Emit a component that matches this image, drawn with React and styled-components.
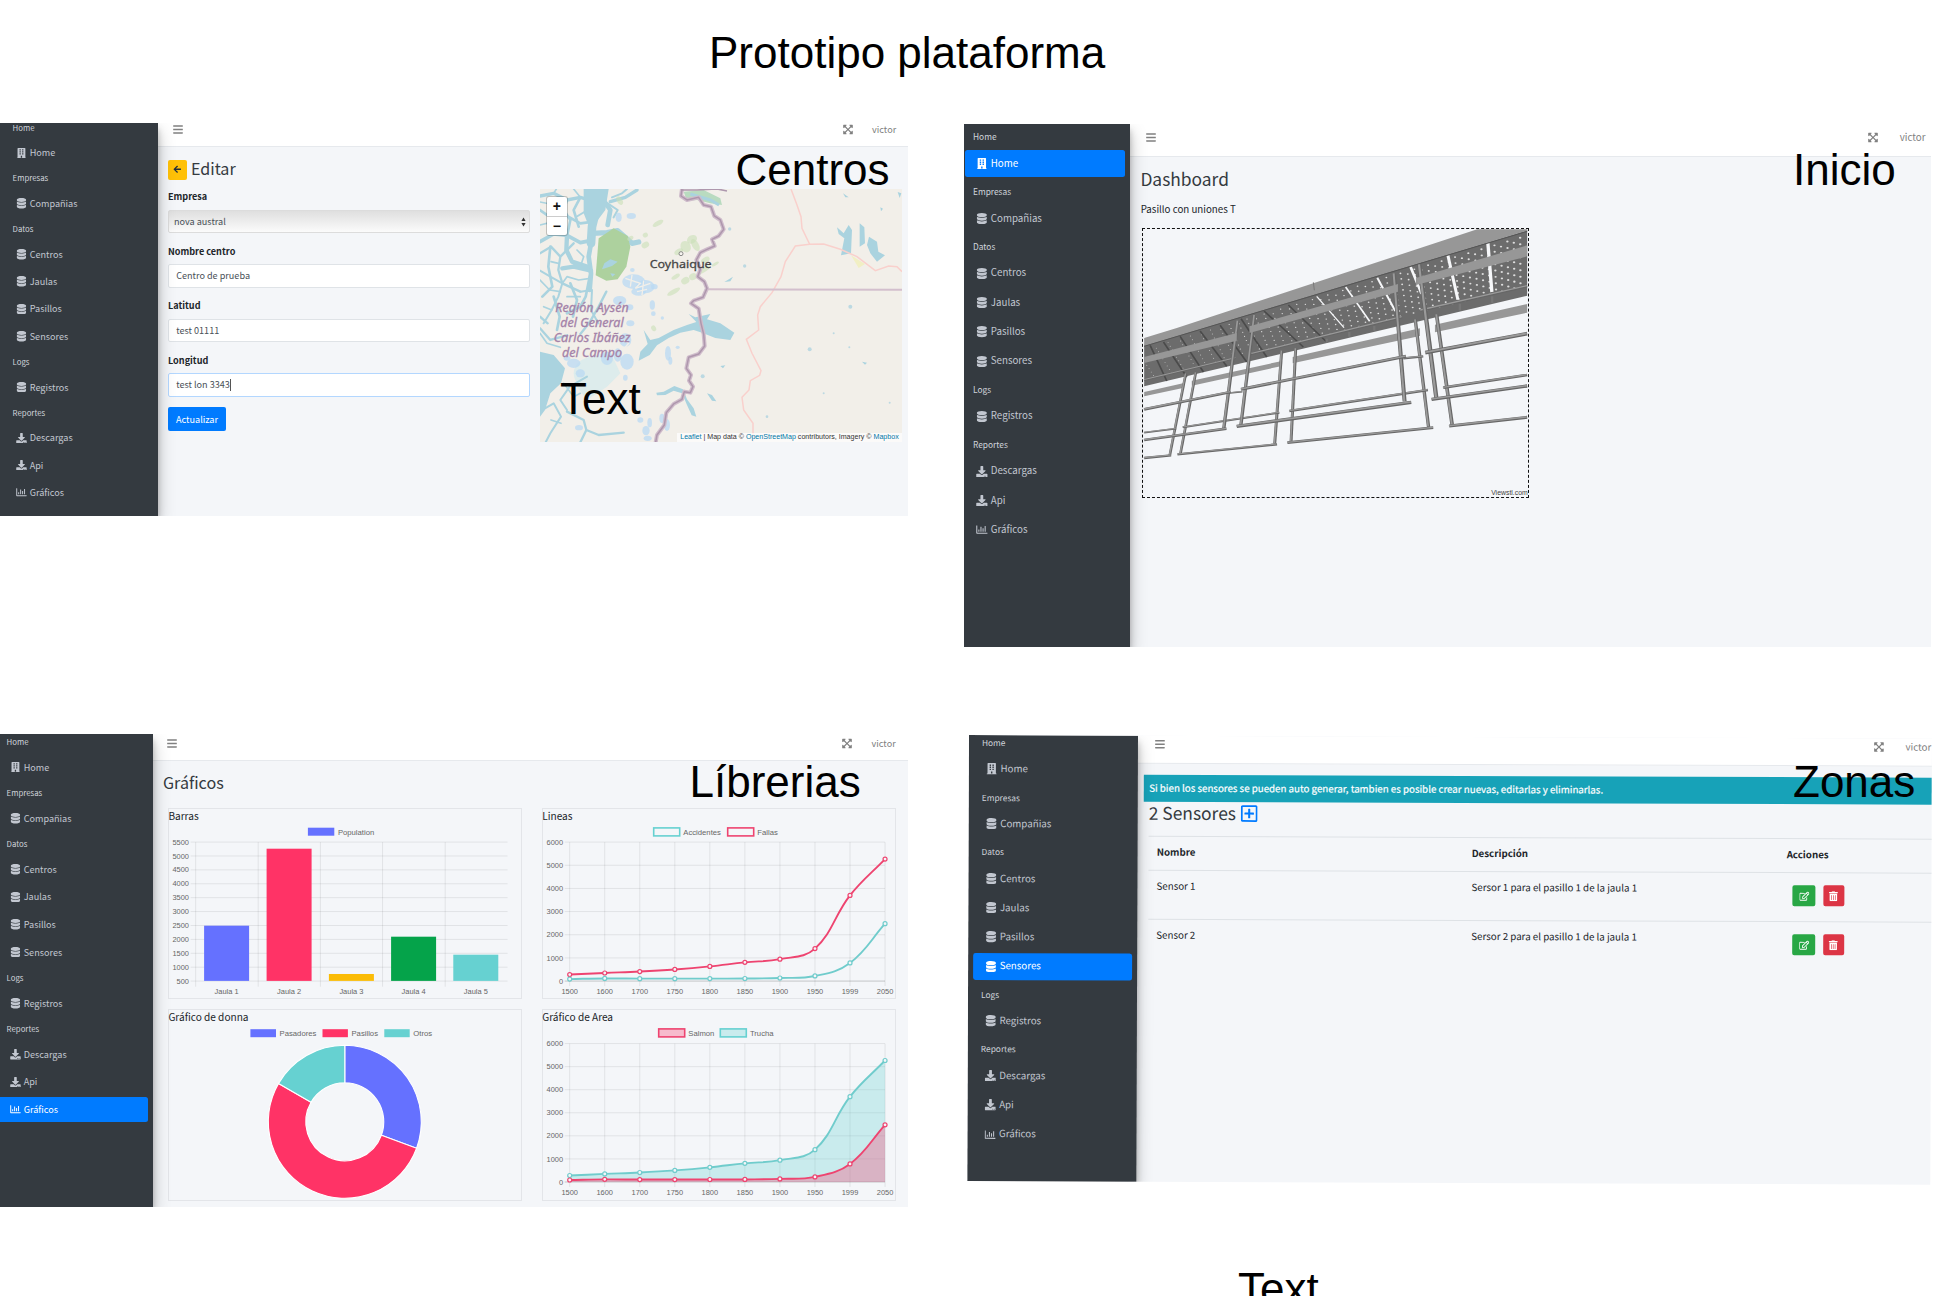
import React from "react";
import styled, { createGlobalStyle, css } from "styled-components";
import {
  FaArrowLeft,
  FaBars,
  FaBuilding,
  FaDatabase,
  FaDownload,
  FaExpandArrowsAlt,
  FaRegChartBar,
  FaRegEdit,
  FaRegPlusSquare,
  FaTrashAlt,
} from "react-icons/fa";

const ui = `"Noto Sans CJK SC", "Noto Sans", sans-serif`;
const helv = `"Liberation Sans", Arial, sans-serif`;

const Global = createGlobalStyle`
  * { box-sizing: border-box; }
  html, body { margin: 0; background: #fff; overflow: hidden; }
`;

/* ---------- board ---------- */

const Board = styled.div`
  position: relative;
  width: 1934px;
  height: 1296px;
  overflow: hidden;
  display: grid;
  grid-template-columns: 964px 970px;
  grid-template-rows: 123px 611px 562px;
  background: #fff;
  font-family: ${ui};
`;

const BoardHeader = styled.header`
  grid-column: 1 / -1;
  padding: 28px 0 0 709px;
`;

const BoardTitle = styled.h1`
  margin: 0;
  font: 400 44px/50px ${helv};
  color: #000;
  white-space: nowrap;
`;

const Cell = styled.section`
  position: relative;
  padding: ${(p) => p.$pad || 0};
`;

const Caption = styled.div`
  position: absolute;
  left: ${(p) => p.$x}px;
  top: ${(p) => p.$y}px;
  z-index: 3;
  font: 400 44px/50px ${helv};
  color: #000;
  white-space: nowrap;
`;

/* ---------- application frame ---------- */

const Screen = styled.div`
  display: flex;
  width: ${(p) => p.$w}px;
  height: ${(p) => p.$h}px;
  overflow: hidden;
  background: #f4f6f9;
  color: #212529;
  font-size: ${(p) => p.$font}px;
  ${(p) => p.$tilt && css`
    transform: rotate(${p.$tilt}deg);
    transform-origin: 0 0;
  `}
`;

const Side = styled.nav`
  flex: none;
  position: relative;
  z-index: 2;
  width: ${(p) => p.$w}px;
  background: #343a40;
  box-shadow: 0 8px 16px rgba(0, 0, 0, 0.25), 0 6px 6px rgba(0, 0, 0, 0.22);
  overflow: hidden;
`;

const SideList = styled.ul`
  list-style: none;
  margin: ${(p) => p.$shift}px 0 0;
  padding: 0;
`;

const SideHeader = styled.li`
  display: flex;
  align-items: center;
  height: ${(p) => p.$h}px;
  padding: 0 0 1.4px ${(p) => p.$x}px;
  font-size: 0.86em;
  line-height: 1;
  color: #d0d4db;
`;

const SideItem = styled.li`
  display: flex;
  align-items: center;
  height: ${(p) => p.$h}px;
  margin: 0 5px ${(p) => p.$gap}px ${(p) => p.$left}px;
  padding-left: ${(p) => p.$x}px;
  border-radius: 2.5px;
  line-height: 1;
  color: ${(p) => (p.$on ? "#fff" : "#c2c7d0")};
  background: ${(p) => (p.$on ? "#007bff" : "transparent")};
  svg {
    flex: none;
    width: 1.2em;
    height: 1.15em;
    margin-right: 0.32em;
  }
`;

const Main = styled.div`
  flex: 1;
  min-width: 0;
`;

const Top = styled.header`
  display: flex;
  height: ${(p) => p.$h}px;
  padding: ${(p) => p.$pad};
  background: #fff;
  border-bottom: 1px solid #e6e9ed;
  color: #808080;
  line-height: 11px;
  svg {
    width: 10px;
    height: 11px;
  }
`;

const User = styled.span`
  margin-left: ${(p) => p.$gap}px;
`;

const Grow = styled.span`
  flex: 1;
`;

const MENU = [
  ["Home", [["Home", FaBuilding]]],
  ["Empresas", [["Compañias", FaDatabase]]],
  ["Datos", [["Centros", FaDatabase], ["Jaulas", FaDatabase], ["Pasillos", FaDatabase], ["Sensores", FaDatabase]]],
  ["Logs", [["Registros", FaDatabase]]],
  ["Reportes", [["Descargas", FaDownload], ["Api", FaDownload], ["Gráficos", FaRegChartBar]]],
];

function SideMenu({ w, shift, head, item, gap, headX, left, itemX, active }) {
  return (
    <Side $w={w}>
      <SideList $shift={shift}>
        {MENU.map(([title, items]) => (
          <React.Fragment key={title}>
            <SideHeader $h={head} $x={headX}>{title}</SideHeader>
            {items.map(([name, Icon]) => (
              <SideItem key={name} $h={item} $gap={gap} $left={left} $x={itemX} $on={active === name}>
                <Icon />
                {name}
              </SideItem>
            ))}
          </React.Fragment>
        ))}
      </SideList>
    </Side>
  );
}

function TopBar({ h, pad, gap }) {
  return (
    <Top $h={h} $pad={pad}>
      <FaBars />
      <Grow />
      <FaExpandArrowsAlt />
      <User $gap={gap}>victor</User>
    </Top>
  );
}

const Heading = styled.h2`
  margin: ${(p) => p.$m || 0};
  font-size: ${(p) => p.$size}px;
  font-weight: 400;
  line-height: ${(p) => p.$lh || 24}px;
  color: #343a40;
  display: flex;
  align-items: center;
`;

/* ---------- Centros ---------- */

const EditHead = styled.div`
  display: flex;
  align-items: center;
  gap: 4px;
  padding: 12.5px 0 0 9.6px;
`;

const BackButton = styled.button`
  display: grid;
  place-items: center;
  width: 19px;
  height: 20px;
  padding: 0;
  border: 0;
  border-radius: 2px;
  background: #ffc107;
  color: #1f2d3d;
  font-size: 8.5px;
`;

const EditTitle = styled(Heading)`
  margin-top: -3px;
`;

const EditBody = styled.div`
  display: flex;
  gap: 9.7px;
  padding: 9.7px 0 0 9.6px;
`;

const Form = styled.form`
  width: 362px;
`;

const Field = styled.div`
  margin-bottom: 10.4px;
`;

const FieldLabel = styled.label`
  display: block;
  height: 16px;
  line-height: 15.4px;
  margin-bottom: 4.7px;
  font-weight: 700;
`;

const Input = styled.div`
  display: flex;
  align-items: center;
  height: 23.4px;
  padding: 0 7.2px;
  border: 1px solid ${(p) => (p.$focus ? "#b3d7ff" : "#dfe3e7")};
  border-radius: 2px;
  background: #fff;
  color: #495057;
  line-height: 1;
`;

const Select = styled(Input)`
  justify-content: space-between;
  padding: 0 2.5px 0 5px;
  border: 1px solid #dcdcdc;
  background: linear-gradient(#dfdfdf, #eeeeee 55%, #fbfbfb);
`;

const Caret = styled.i`
  width: 0.7px;
  height: 12px;
  background: #555;
`;

const Submit = styled.button`
  width: 58px;
  height: 24px;
  padding: 0;
  border: 0;
  border-radius: 2px;
  background: #007bff;
  color: #fff;
  font: 9.1px/1 ${ui};
`;

const MapBox = styled.div`
  position: relative;
  width: 362px;
  height: 253.3px;
  overflow: hidden;
  background: #f2efe9;
  > svg {
    display: block;
    width: 100%;
    height: 100%;
  }
`;

const ZoomBox = styled.div`
  position: absolute;
  left: 7.6px;
  top: 7.6px;
  width: 19.4px;
  height: 38.5px;
  border-radius: 2px;
  background: #fff;
  box-shadow: 0 0 0 1px rgba(0, 0, 0, 0.2);
  display: grid;
  grid-template-rows: 1fr 1fr;
`;

const ZoomButton = styled.span`
  display: grid;
  place-items: center;
  font: 700 14px/1 ${helv};
  color: #111;
  & + & {
    border-top: 1px solid #ccc;
  }
`;

const Credit = styled.div`
  position: absolute;
  right: 0;
  bottom: 0;
  height: 9.6px;
  padding: 0 3px;
  background: rgba(255, 255, 255, 0.7);
  font: 7.08px/9.6px ${helv};
  color: #333;
  white-space: nowrap;
  a {
    color: #0078a8;
  }
`;

const SHORES = [
  [26, "M205 237 L200 290 L185 350 L182 400"],
  [14, "M205 250 L240 300 L232 345 M182 400 L175 440 L182 490 L178 540"],
  [16, "M185 370 L230 368 L262 362 L305 400 L325 396"],
  [10, "M29 258 L70 250 L110 270 L150 262 L195 275 M320 240 L285 262 L240 275"],
  [8, "M29 300 L60 322 L110 318 L150 340 L190 335 M110 270 L100 300 L120 330 L112 370"],
  [11, "M29 395 L70 372 L110 376 L150 398 L180 392"],
  [7, "M29 430 L62 410 L90 440 L84 480 L96 520 L150 545 M90 440 L130 400"],
  [13, "M110 376 L108 420 L125 455 L170 470 M96 475 L130 470 L182 482"],
  [6, "M29 482 L60 500 L96 520 L84 560 L64 600 L40 640 M150 545 L185 540 L182 600 L204 640"],
  [8, "M60 410 L54 470 L66 530 L36 560 M178 500 L166 560 L150 590 L110 610"],
  [7, "M228 545 L205 590 L176 640 L150 672 M29 655 L60 690 L110 676 M29 620 L52 640"],
  [6, "M170 800 L118 830 L90 870 L110 900 M36 900 L70 880 L92 920 L60 970 L46 997"],
  [7, "M150 997 L168 960 L205 975 L280 968 M168 960 L160 930 L110 905"],
  [8, "M145 350 L130 300 L150 262 M70 560 L88 620 L80 660 M120 520 L140 570 L128 620"],
  [5, "M29 345 L58 338 L96 352 L112 376 M58 338 L64 372 M29 276 L60 282 L98 300 M70 250 L78 237 M130 237 L150 262"],
  [6, "M232 280 L262 300 L250 322 M245 262 L275 250 L290 237 M172 300 L142 318 M190 262 L165 240"],
  [5, "M140 420 L160 440 L150 470 M62 455 L84 460 M29 510 L58 540 L90 545 M110 560 L150 560 M40 590 L64 600"],
  [5, "M96 520 L110 500 L145 510 L180 505 M29 670 L50 700 L90 712 M100 820 L130 860 L150 850 M62 930 L92 940"],
];

const LAKES = [
  [310, 515, 34, 22], [345, 530, 28, 20], [325, 545, 22, 12], [372, 530, 10, 8], [265, 322, 9, 14], [303, 318, 14, 9],
  [268, 572, 20, 14], [298, 592, 11, 9], [300, 640, 12, 9], [285, 690, 18, 20], [290, 755, 20, 24], [262, 735, 12, 20],
  [366, 585, 8, 14], [369, 611, 7, 7], [396, 624, 5, 5], [413, 730, 9, 22], [420, 752, 6, 12], [442, 712, 6, 5],
  [130, 760, 20, 14], [150, 790, 14, 12], [110, 745, 10, 7], [285, 803, 7, 9], [330, 930, 9, 8], [347, 962, 11, 14],
  [358, 938, 7, 14], [395, 925, 8, 14], [410, 945, 9, 18], [146, 953, 12, 8], [285, 907, 11, 6], [352, 985, 12, 8],
  [306, 480, 7, 6], [230, 745, 18, 20],
];

const WOODS = [
  [383, 340, 18, 7], [345, 405, 12, 9], [268, 272, 8, 14], [485, 388, 16, 12], [466, 410, 15, 18], [495, 405, 10, 20],
  [445, 425, 14, 8], [525, 450, 14, 8], [520, 480, 24, 7], [465, 512, 13, 10], [436, 500, 14, 6], [430, 545, 22, 7],
  [345, 375, 8, 7], [555, 462, 12, 4], [370, 655, 7, 9], [300, 385, 10, 6], [488, 500, 12, 10], [392, 690, 8, 5],
];

const BORDER =
  "M455 237 L452 258 L470 270 L505 262 L520 285 L542 290 L552 318 L570 330 L580 358 L565 378 L545 388 L553 408 L530 418 L510 428 L498 450 L510 478 L502 500 L522 515 L530 535 L518 562 L490 572 L482 580 L505 596 L512 640 L520 672 L523 708 L505 732 L475 742 L468 775 L482 795 L476 812 L488 830 L480 848 L462 845 L455 868 L430 882 L408 908 L402 945 L380 975 L376 997";

function RegionMap() {
  return (
    <svg viewBox="29 237 1086 760" preserveAspectRatio="none">
      <rect x="29" y="237" width="1086" height="760" fill="#f2efe9" />
      <ellipse cx="190" cy="790" rx="60" ry="50" fill="#ddecec" />
      <path d="M175 740 L240 725 L270 790 L230 830 L170 870 L140 830Z" fill="#ddecec" />
      {SHORES.map(([w, d], i) => (
        <path key={i} d={d} fill="none" stroke="#aad3df" strokeWidth={w} strokeLinejoin="round" strokeLinecap="round" />
      ))}
      <path d="M29 725 L70 735 L104 775 L92 820 L60 850 L44 900 L29 920Z M160 237 L235 237 L225 300 L180 360 L160 310Z" fill="#aad3df" />
      <path d="M205 385 L250 355 L292 378 L300 410 L288 470 L262 508 L228 512 L196 496Z" fill="#add19e" />
      <path d="M222 460 L240 448 L262 455 L245 468 L215 478Z M240 490 L255 492 L246 500Z" fill="#aad3df" />
      {WOODS.map(([x, y, a, b], i) => (
        <ellipse key={i} cx={x} cy={y} rx={a} ry={b} fill="#c9dfb8" opacity="0.6" transform={`rotate(-30 ${x} ${y})`} />
      ))}
      <path d="M460 245 L520 240 L570 265 L575 285 L540 280 L500 270 L470 272Z" fill="#b9dbc0" />
      <path d="M480 252 L540 270 L566 285" stroke="#aad3df" strokeWidth="9" fill="none" />
      {LAKES.map(([x, y, a, b], i) => (
        <ellipse key={i} cx={x} cy={y} rx={a} ry={b} fill="#b9d9f3" opacity="0.75" />
      ))}
      <path d="M285 505 L330 520 L315 535 L360 520 M280 690 L295 700 L282 715 M320 545 L350 538 M305 495 L300 530 M340 512 L335 555" stroke="#f2efe9" strokeWidth="4" fill="none" />
      <path
        d="M475 612 L495 622 L540 612 L530 628 L570 640 L612 668 L600 690 L555 684 L515 668 L490 660 L450 668 L415 684 L380 706 L358 735 L325 752 L330 725 L352 702 L340 660 L360 690 L385 684 L430 660 L470 645 L498 636Z"
        fill="#aad3df"
      />
      <path
        d="M378 848 L400 845 L432 828 L458 838 L470 868 L490 895 L498 920 L484 916 L470 885 L455 850 L430 842 L405 855 L380 856Z M530 850 L545 855 L558 874 L545 872Z M582 516 L608 500 L600 514Z M570 768 L585 766 L578 775Z M938 250 L955 262 L945 262Z M995 755 L1010 758 L1004 764Z"
        fill="#aad3df"
      />
      <path
        d="M920 352 L940 370 L955 345 L965 360 L962 430 L932 436 L942 385 L925 372Z M988 340 L1002 352 L1004 400 L988 410Z M1016 380 L1040 395 L1044 425 L1064 436 L1040 455 L1020 430 L1010 405Z M1102 246 L1113 250 L1108 264Z M1050 292 L1058 296 L1052 304Z"
        fill="#aad3df"
      />
      <path d="M962 436 L1004 462 L985 474Z" fill="#f1efc4" />
      <g fill="#bcd9e2">
        <circle cx="643" cy="468" r="5" /><circle cx="960" cy="590" r="6" /><circle cx="838" cy="718" r="6" />
        <circle cx="910" cy="670" r="3" /><circle cx="957" cy="712" r="3" /><circle cx="517" cy="799" r="6" />
        <circle cx="710" cy="920" r="4" /><circle cx="880" cy="850" r="3" /><circle cx="1078" cy="878" r="3" /><circle cx="598" cy="357" r="5" />
      </g>
      <path
        d="M782 237 L800 285 L812 320 L815 355 L838 403 L880 402 L930 418 L980 440 L1035 482 L1075 468 L1100 470 L1115 485 M838 403 L795 408 L765 455 L752 500 L725 548 L690 590 L682 615 L685 660 L648 688 L665 730 L692 782 L688 796 L660 812 L656 840 L635 862 L640 900 L668 940 L668 997"
        fill="none"
        stroke="#f9d0cc"
        strokeWidth="4.5"
      />
      <path d="M530 538 L1115 539" stroke="#d3bfcd" strokeWidth="6" />
      <path d={BORDER} fill="none" stroke="#cfbccb" strokeWidth="12" strokeLinejoin="round" />
      <path d={BORDER} fill="none" stroke="#ae97ad" strokeWidth="4.5" strokeLinejoin="round" />
      <path d="M452 240 L500 240 L560 237 L590 243" fill="none" stroke="#ae97ad" strokeWidth="5" />
      <circle cx="452" cy="431" r="6" fill="#f7f5f0" stroke="#777" strokeWidth="2.5" />
      <g fontFamily={`"Noto Sans", sans-serif`} textAnchor="middle">
        <text x="451" y="475" fontSize="34" fill="#444" stroke="#444" strokeWidth="0.8" textLength="186" lengthAdjust="spacingAndGlyphs">Coyhaique</text>
        <g fontSize="36" fontStyle="italic" fill="#a482a8" stroke="#a482a8" strokeWidth="0.9">
          <text x="185" y="607" textLength="220" lengthAdjust="spacingAndGlyphs">Región Aysén</text>
          <text x="185" y="652" textLength="190" lengthAdjust="spacingAndGlyphs">del General</text>
          <text x="185" y="697" textLength="230" lengthAdjust="spacingAndGlyphs">Carlos Ibáñez</text>
          <text x="185" y="742" textLength="180" lengthAdjust="spacingAndGlyphs">del Campo</text>
        </g>
      </g>
    </svg>
  );
}

const FIELDS = [["Nombre centro", "Centro de prueba"], ["Latitud", "test 01111"], ["Longitud", "test lon 3343"]];

function Centros() {
  return (
    <Screen $w={907.7} $h={392.6} $font={9.1}>
      <SideMenu w={158.4} shift={-6.4} head={23.4} item={25.6} gap={1.77} headX={12.6} left={4.5} itemX={11.4} />
      <Main>
        <TopBar h={24} pad="1px 11.5px 0 14.3px" gap={19.2} />
        <EditHead>
          <BackButton><FaArrowLeft /></BackButton>
          <EditTitle $size={16.1} $lh={20}>Editar</EditTitle>
        </EditHead>
        <EditBody>
          <Form>
            <Field>
              <FieldLabel>Empresa</FieldLabel>
              <Select>
                nova austral
                <svg width="5" height="10" viewBox="0 0 5 10" fill="#333">
                  <path d="M2.5 0.6 L4.6 4 H0.4Z M2.5 9.4 L4.6 6 H0.4Z" />
                </svg>
              </Select>
            </Field>
            {FIELDS.map(([label, value]) => (
              <Field key={label}>
                <FieldLabel>{label}</FieldLabel>
                <Input $focus={label === "Longitud"}>
                  {value}
                  {label === "Longitud" && <Caret />}
                </Input>
              </Field>
            ))}
            <Submit type="button">Actualizar</Submit>
          </Form>
          <MapBox>
            <RegionMap />
            <ZoomBox>
              <ZoomButton>+</ZoomButton>
              <ZoomButton>−</ZoomButton>
            </ZoomBox>
            <Credit>
              <a>Leaflet</a> | Map data © <a>OpenStreetMap</a> contributors, Imagery © <a>Mapbox</a>
            </Credit>
          </MapBox>
        </EditBody>
      </Main>
    </Screen>
  );
}

/* ---------- Inicio ---------- */

const Lead = styled.p`
  margin: 10.4px 0 10.6px 10.7px;
  line-height: 16px;
`;

const Viewer = styled.div`
  position: relative;
  width: 387px;
  height: 270px;
  margin-left: 12.3px;
  border: 1px dashed #111;
  > svg {
    display: block;
    width: 100%;
    height: 100%;
  }
`;

const ViewerCredit = styled.span`
  position: absolute;
  right: 0.5px;
  bottom: 0;
  font: 6.9px/8px ${helv};
  color: #444;
`;

const SLITS = [
  [1104, 98, 1116, 245, 10], [984, 135, 1014, 268, 9], [872, 170, 905, 250, 8],
  [772, 202, 826, 302, 6], [677, 230, 749, 333, 5], [590, 258, 672, 352, 4],
];
const SEAMS = [
  [505, 284, 620, 395], [432, 302, 550, 410], [363, 325, 440, 440], [300, 345, 380, 455], [240, 362, 320, 468],
  [180, 378, 250, 485], [130, 395, 200, 500], [90, 405, 140, 512],
];
const BEAMS = [
  "72,440 350,368 350,391 72,458", "388,348 834,221 834,244 388,368", "888,203 1222,105 1222,138 888,224",
  "72,545 192,518 192,532 72,558", "215,511 486,452 486,467 215,526", "518,440 900,354 900,377 518,459",
  "945,343 1222,281 1222,307 945,366",
];
const RAILS = [
  [72, 509, 347, 443, 6], [388, 432, 846, 320, 7], [902, 300, 1222, 227, 8],
  [330, 548, 367, 544, 5], [850, 444, 910, 438, 7],
  [72, 667, 168, 655, 5], [188, 651, 478, 607, 6], [508, 602, 924, 539, 7], [970, 532, 1222, 494, 8],
  [72, 743, 153, 735, 7], [172, 732, 471, 702, 7], [502, 697, 940, 652, 8], [988, 647, 1222, 621, 9],
];
const POSTS = [
  [197, 490, 149, 735, 8], [227, 487, 181, 730, 8], [485, 422, 464, 700, 9], [527, 415, 513, 695, 9],
  [886, 328, 926, 650, 10], [950, 313, 997, 645, 11],
];
const FRONT_RAILS = [
  [72, 597, 332, 545, 8], [363, 537, 858, 438, 9], [916, 427, 1222, 370, 11],
  [72, 689, 319, 655, 8], [350, 648, 874, 576, 10], [935, 567, 1222, 527, 10],
];
const FRONT_POSTS = [
  [353, 332, 311, 655, 10], [403, 315, 362, 648, 10], [822, 190, 854, 573, 12], [898, 163, 950, 568, 13],
];

function Bars({ list }) {
  return list.map(([x1, y1, x2, y2, w], i) => (
    <g key={i}>
      <line x1={x1} y1={y1} x2={x2} y2={y2} stroke="#666" strokeWidth={w} />
      <line x1={x1 - 1} y1={y1 - 1} x2={x2 - 1} y2={y2 - 1} stroke="#9a9a9a" strokeWidth={w * 0.5} />
    </g>
  ));
}

function perforations() {
  const dots = [];
  for (let c = 0; c < 50; c += 1) {
    const t = c / 49;
    const x = 50 + 1170 * Math.pow(t, 0.8);
    const top = 408 - ((x - 72) * 346) / 1150;
    const bottom = 528 - ((x - 72) * 273) / 1150;
    for (let r = 0; r < 8; r += 1) {
      const v = (r + 0.5 + (c % 2) * 0.5) / 9;
      const px = x + v * 60 * (1 - t);
      if (px < 1218 && px > 76) {
        const py = top + (bottom - top) * v * 0.92 + 4 - (px - x) * 0.28;
        dots.push([px, py, 1.2 + 1.9 * t]);
      }
    }
  }
  return dots;
}

function Walkway() {
  return (
    <svg viewBox="68.5 56 1156 804" preserveAspectRatio="none">
      <polygon points="72,404 1222,60 1222,256 72,528" fill="#6c6c6c" />
      {perforations().map(([x, y, r], i) => (
        <ellipse key={i} cx={x} cy={y} rx={r * 1.2} ry={r} fill="#dedede" />
      ))}
      {SEAMS.map(([x1, y1, x2, y2], i) => (
        <line key={i} x1={x1} y1={y1} x2={x2} y2={y2} stroke="#4b4b4b" strokeWidth="5" />
      ))}
      {SLITS.map(([x1, y1, x2, y2, w], i) => (
        <line key={i} x1={x1} y1={y1} x2={x2} y2={y2} stroke="#f7f8fa" strokeWidth={w} />
      ))}
      <polygon points="72,383 170,353 1072,57 1222,57 1222,61 72,407" fill="#979797" />
      <path d="M72 408 L1222 63" stroke="#555" strokeWidth="3" />
      <path d="M580 216 L583 240" stroke="#777" strokeWidth="3" />
      {BEAMS.slice(3).map((p) => <polygon key={p} points={p} fill="#979797" />)}
      <Bars list={POSTS} />
      <Bars list={RAILS} />
      <Bars list={FRONT_POSTS} />
      {BEAMS.slice(0, 3).map((p) => <polygon key={p} points={p} fill="#979797" />)}
      <Bars list={FRONT_RAILS} />
      <path d="M688 365 v14 M763 347 v14 M620 385 v12 M1020 280 v20 M1117 258 v20" stroke="#777" strokeWidth="7" />
    </svg>
  );
}

function Inicio() {
  return (
    <Screen $w={966.7} $h={523} $font={9.74}>
      <SideMenu w={165.8} shift={0} head={25.7} item={27.4} gap={1.92} headX={8.8} left={1} itemX={10.8} active="Home" />
      <Main>
        <TopBar h={32.6} pad="8px 5.4px 0 16px" gap={21.5} />
        <Heading $size={17.4} $m="10.2px 0 0 10.4px">Dashboard</Heading>
        <Lead>Pasillo con uniones T</Lead>
        <Viewer>
          <Walkway />
          <ViewerCredit>Viewstl.com</ViewerCredit>
        </Viewer>
      </Main>
    </Screen>
  );
}

/* ---------- Librerias ---------- */

const ChartGrid = styled.div`
  display: grid;
  grid-template-columns: 353.2px 353.7px;
  grid-auto-rows: 191.7px;
  gap: 10px 20.7px;
  padding: 14px 0 0 15.4px;
`;

const Card = styled.figure`
  margin: 0;
  border: 1px solid #e3e5e9;
  svg {
    display: block;
    width: 100%;
    height: 175.7px;
  }
`;

const CardTitle = styled.figcaption`
  height: 14px;
  margin-left: -1px;
  font-size: 10.1px;
  line-height: 13px;
  white-space: nowrap;
`;

const INK = "#666";
const GRID = "rgba(0,0,0,0.1)";
const BLUE = "#6571ff";
const RED = "#ff3366";
const TEAL = "#66d1d1";

function Legend({ items, y }) {
  return items.map(([x, w, label, fill, stroke]) => (
    <g key={label}>
      <rect x={x} y={y} width={w} height="8" fill={fill} stroke={stroke} strokeWidth="1.6" />
      <text x={x + w + 3.6} y={y + 7} fontSize="7.7" fill={INK}>{label}</text>
    </g>
  ));
}

function BarChart() {
  const bars = [[204.5, 926, BLUE], [267, 849, RED], [329.3, 974.3, "#fbbc06"], [391.5, 937, "#05a34a"], [453.7, 955, TEAL]];
  return (
    <svg viewBox="169.4 823.3 351.2 175.7" preserveAspectRatio="none" fontFamily={helv}>
      <Legend y={828} items={[[308.3, 26.4, "Population", BLUE]]} />
      {Array.from({ length: 11 }, (_, i) => (
        <g key={i}>
          <line x1="191" x2="508" y1={842.4 + i * 13.9} y2={842.4 + i * 13.9} stroke={GRID} strokeWidth="0.8" />
          <text x="189.4" y={845 + i * 13.9} fontSize="7.45" textAnchor="end" fill={INK}>{5500 - i * 500}</text>
        </g>
      ))}
      {[196.1, 258.6, 320.8, 383, 445.6].map((x) => (
        <line key={x} x1={x} x2={x} y1="842.4" y2="987" stroke={GRID} strokeWidth="0.8" />
      ))}
      {bars.map(([x, y, c], i) => (
        <g key={x}>
          <rect x={x} y={y} width="45" height={981.2 - y} fill={c} />
          <text x={x + 22.5} y="994" fontSize="7.45" textAnchor="middle" fill={INK}>{`Jaula ${i + 1}`}</text>
        </g>
      ))}
    </svg>
  );
}

const LOW = [86, 114, 106, 106, 107, 111, 133, 221, 783, 2478];
const HIGH = [282, 350, 411, 502, 635, 809, 947, 1402, 3700, 5267];
const YEARS = [1500, 1600, 1700, 1750, 1800, 1850, 1900, 1950, 1999, 2050];

function smooth(pts) {
  const ctrl = pts.map((p, i) => {
    const a = pts[i - 1] || p;
    const b = pts[i + 1] || p;
    const d1 = Math.hypot(p[0] - a[0], p[1] - a[1]);
    const d2 = Math.hypot(b[0] - p[0], b[1] - p[1]);
    const s = 0.4 / (d1 + d2);
    const dx = b[0] - a[0];
    const dy = b[1] - a[1];
    return [p[0] - s * d1 * dx, p[1] - s * d1 * dy, p[0] + s * d2 * dx, p[1] + s * d2 * dy];
  });
  return pts
    .map((p, i) => (i ? `C${ctrl[i - 1][2]} ${ctrl[i - 1][3]} ${ctrl[i][0]} ${ctrl[i][1]} ${p[0]} ${p[1]}` : `M${p[0]} ${p[1]}`))
    .join(" ");
}

function LineChart({ top, zero, box, legend, series, filled }) {
  const step = (zero - top) / 6;
  return (
    <svg viewBox={`543.3 ${box} 351.7 175.7`} preserveAspectRatio="none" fontFamily={helv}>
      <Legend y={box + 4.9} items={legend} />
      {[6000, 5000, 4000, 3000, 2000, 1000, 0].map((v, i) => (
        <g key={v}>
          <line x1="565" x2="885.3" y1={top + i * step} y2={top + i * step} stroke={v ? GRID : "rgba(0,0,0,0.25)"} strokeWidth="0.8" />
          <text x="563.4" y={top + i * step + 2.6} fontSize="7.45" textAnchor="end" fill={INK}>{v}</text>
        </g>
      ))}
      {YEARS.map((v, i) => (
        <g key={v}>
          <line x1={570 + i * 35.04} x2={570 + i * 35.04} y1={top} y2={zero + 5} stroke={GRID} strokeWidth="0.8" />
          <text x={570 + i * 35.04} y={zero + 12.7} fontSize="7.45" textAnchor="middle" fill={INK}>{v}</text>
        </g>
      ))}
      {series.map(([data, color, fill]) => {
        const pts = data.map((v, i) => [570 + i * 35.04, zero - (v / 1000) * step]);
        const d = smooth(pts);
        return (
          <g key={color}>
            {filled && <path d={`${d} L885.36 ${zero} L570 ${zero}Z`} fill={fill} />}
            <path d={d} fill="none" stroke={color} strokeWidth="1.9" />
            {pts.map(([x, y]) => (
              <circle key={x} cx={x} cy={y} r="2" fill="#f4f6f9" stroke={color} strokeWidth="1.2" />
            ))}
          </g>
        );
      })}
    </svg>
  );
}

function slice(from, to) {
  const at = (deg, r) => {
    const a = ((deg - 90) * Math.PI) / 180;
    return `${345.2 + r * Math.cos(a)} ${1122.2 + r * Math.sin(a)}`;
  };
  const big = to - from > 180 ? 1 : 0;
  return `M${at(from, 76.5)} A76.5 76.5 0 ${big} 1 ${at(to, 76.5)} L${at(to, 39)} A39 39 0 ${big} 0 ${at(from, 39)}Z`;
}

function Donut() {
  return (
    <svg viewBox="169.4 1024.4 351.2 175.7" preserveAspectRatio="none" fontFamily={helv}>
      <Legend
        y={1029.6}
        items={[[250.8, 25.6, "Pasadores", BLUE], [322.9, 25.4, "Pasillos", RED], [384.7, 25.4, "Otros", TEAL]]}
      />
      {[[0, 110.2, BLUE], [110.2, 300, RED], [300, 360, TEAL]].map(([a, b, c]) => (
        <path key={a} d={slice(a, b)} fill={c} stroke="#fff" strokeWidth="1.1" />
      ))}
    </svg>
  );
}

const SOFT_TEAL = "rgba(102,209,209,0.3)";
const SOFT_RED = "rgba(255,51,102,0.3)";
const LINE_RED = "#ee4470";

function Librerias() {
  return (
    <Screen $w={907.7} $h={472.6} $font={9.1}>
      <SideMenu w={153} shift={-3} head={23.5} item={25.5} gap={2.1} headX={6.6} left={-4} itemX={13.9} active="Gráficos" />
      <Main>
        <TopBar h={27.3} pad="3.7px 12px 0 14.2px" gap={19.4} />
        <Heading $size={16.1} $m="8.4px 0 0 10px">Gráficos</Heading>
        <ChartGrid>
          <Card>
            <CardTitle>Barras</CardTitle>
            <BarChart />
          </Card>
          <Card>
            <CardTitle>Lineas</CardTitle>
            <LineChart
              box={823.3} top={842.4} zero={981.4}
              legend={[[654, 26, "Accidentes", "none", TEAL], [728, 26, "Fallas", "none", LINE_RED]]}
              series={[[HIGH, LINE_RED], [LOW, "#70cccc"]]}
            />
          </Card>
          <Card>
            <CardTitle>Gráfico de donna</CardTitle>
            <Donut />
          </Card>
          <Card>
            <CardTitle>Gráfico de Area</CardTitle>
            <LineChart
              filled
              box={1024.4} top={1044} zero={1182.4}
              legend={[[659, 26, "Salmon", SOFT_RED, LINE_RED], [720.6, 26, "Trucha", SOFT_TEAL, TEAL]]}
              series={[[HIGH, "#70cccc", SOFT_TEAL], [LOW, LINE_RED, SOFT_RED]]}
            />
          </Card>
        </ChartGrid>
      </Main>
    </Screen>
  );
}

/* ---------- Zonas ---------- */

const Notice = styled.div`
  height: 27.7px;
  margin: 10.5px 0 0 5.6px;
  padding-left: 5.5px;
  background: #17a2b8;
  color: #fff;
  line-height: 27.7px;
  white-space: nowrap;
  -webkit-text-stroke: 0.2px #fff;
`;

const AddIcon = styled(FaRegPlusSquare)`
  width: 17px;
  height: 19px;
  margin-left: 5px;
  color: #007bff;
`;

const Table = styled.div`
  margin: 10.3px -3px 0 10.8px;
`;

const Row = styled.div`
  display: grid;
  grid-template-columns: 315px 315px 1fr;
  height: ${(p) => (p.$head ? 34.5 : 49)}px;
  padding: ${(p) => (p.$head ? 7.6 : 7)}px 0 0 8px;
  border-top: ${(p) => (p.$thick ? 1.4 : 1)}px solid #dee2e6;
  font-weight: ${(p) => (p.$head ? 700 : 400)};
  line-height: 16px;
`;

const Actions = styled.div`
  display: flex;
  gap: 7.5px;
  padding: 5.2px 0 0 6px;
`;

const Action = styled.button`
  display: grid;
  place-items: center;
  width: ${(p) => (p.$danger ? 21 : 23.3)}px;
  height: 21px;
  padding: 0;
  border: 0;
  border-radius: 2px;
  background: ${(p) => (p.$danger ? "#dc3545" : "#28a745")};
  color: #fff;
  font-size: 10px;
`;

function Zonas() {
  return (
    <Screen $w={963.3} $h={446} $font={9.74} $tilt={0.22}>
      <SideMenu w={169.3} shift={-5.2} head={25.6} item={27.3} gap={1.9} headX={13} left={4.6} itemX={12.2} active="Sensores" />
      <Main>
        <TopBar h={28} pad="3px 1px 0 16.8px" gap={21} />
        <Notice>
          Si bien los sensores se pueden auto generar, tambien es posible crear nuevas, editarlas y eliminarlas.
        </Notice>
        <Heading $size={17.4} $m="-0.8px 0 0 10.8px">
          2 Sensores
          <AddIcon />
        </Heading>
        <Table>
          <Row $head>
            <span>Nombre</span>
            <span>Descripción</span>
            <span>Acciones</span>
          </Row>
          {[1, 2].map((n) => (
            <Row key={n} $thick={n === 1}>
              <span>Sensor {n}</span>
              <span>Sersor {n} para el pasillo 1 de la jaula 1</span>
              <Actions>
                <Action><FaRegEdit /></Action>
                <Action $danger><FaTrashAlt /></Action>
              </Actions>
            </Row>
          ))}
        </Table>
      </Main>
    </Screen>
  );
}

export default function App() {
  return (
    <Board>
      <Global />
      <BoardHeader>
        <BoardTitle>Prototipo plataforma</BoardTitle>
      </BoardHeader>
      <Cell>
        <Centros />
        <Caption $x={735.5} $y={21.7}>Centros</Caption>
        <Caption $x={560} $y={250.6}>Text</Caption>
      </Cell>
      <Cell $pad="1px 0 0 0.2px">
        <Inicio />
        <Caption $x={829} $y={21.7}>Inicio</Caption>
      </Cell>
      <Cell>
        <Librerias />
        <Caption $x={689.5} $y={22.7}>Líbrerias</Caption>
      </Cell>
      <Cell $pad="1px 0 0 5.3px">
        <Zonas />
        <Caption $x={829} $y={22.7}>Zonas</Caption>
        <Caption $x={274} $y={529.5}>Text</Caption>
      </Cell>
    </Board>
  );
}
